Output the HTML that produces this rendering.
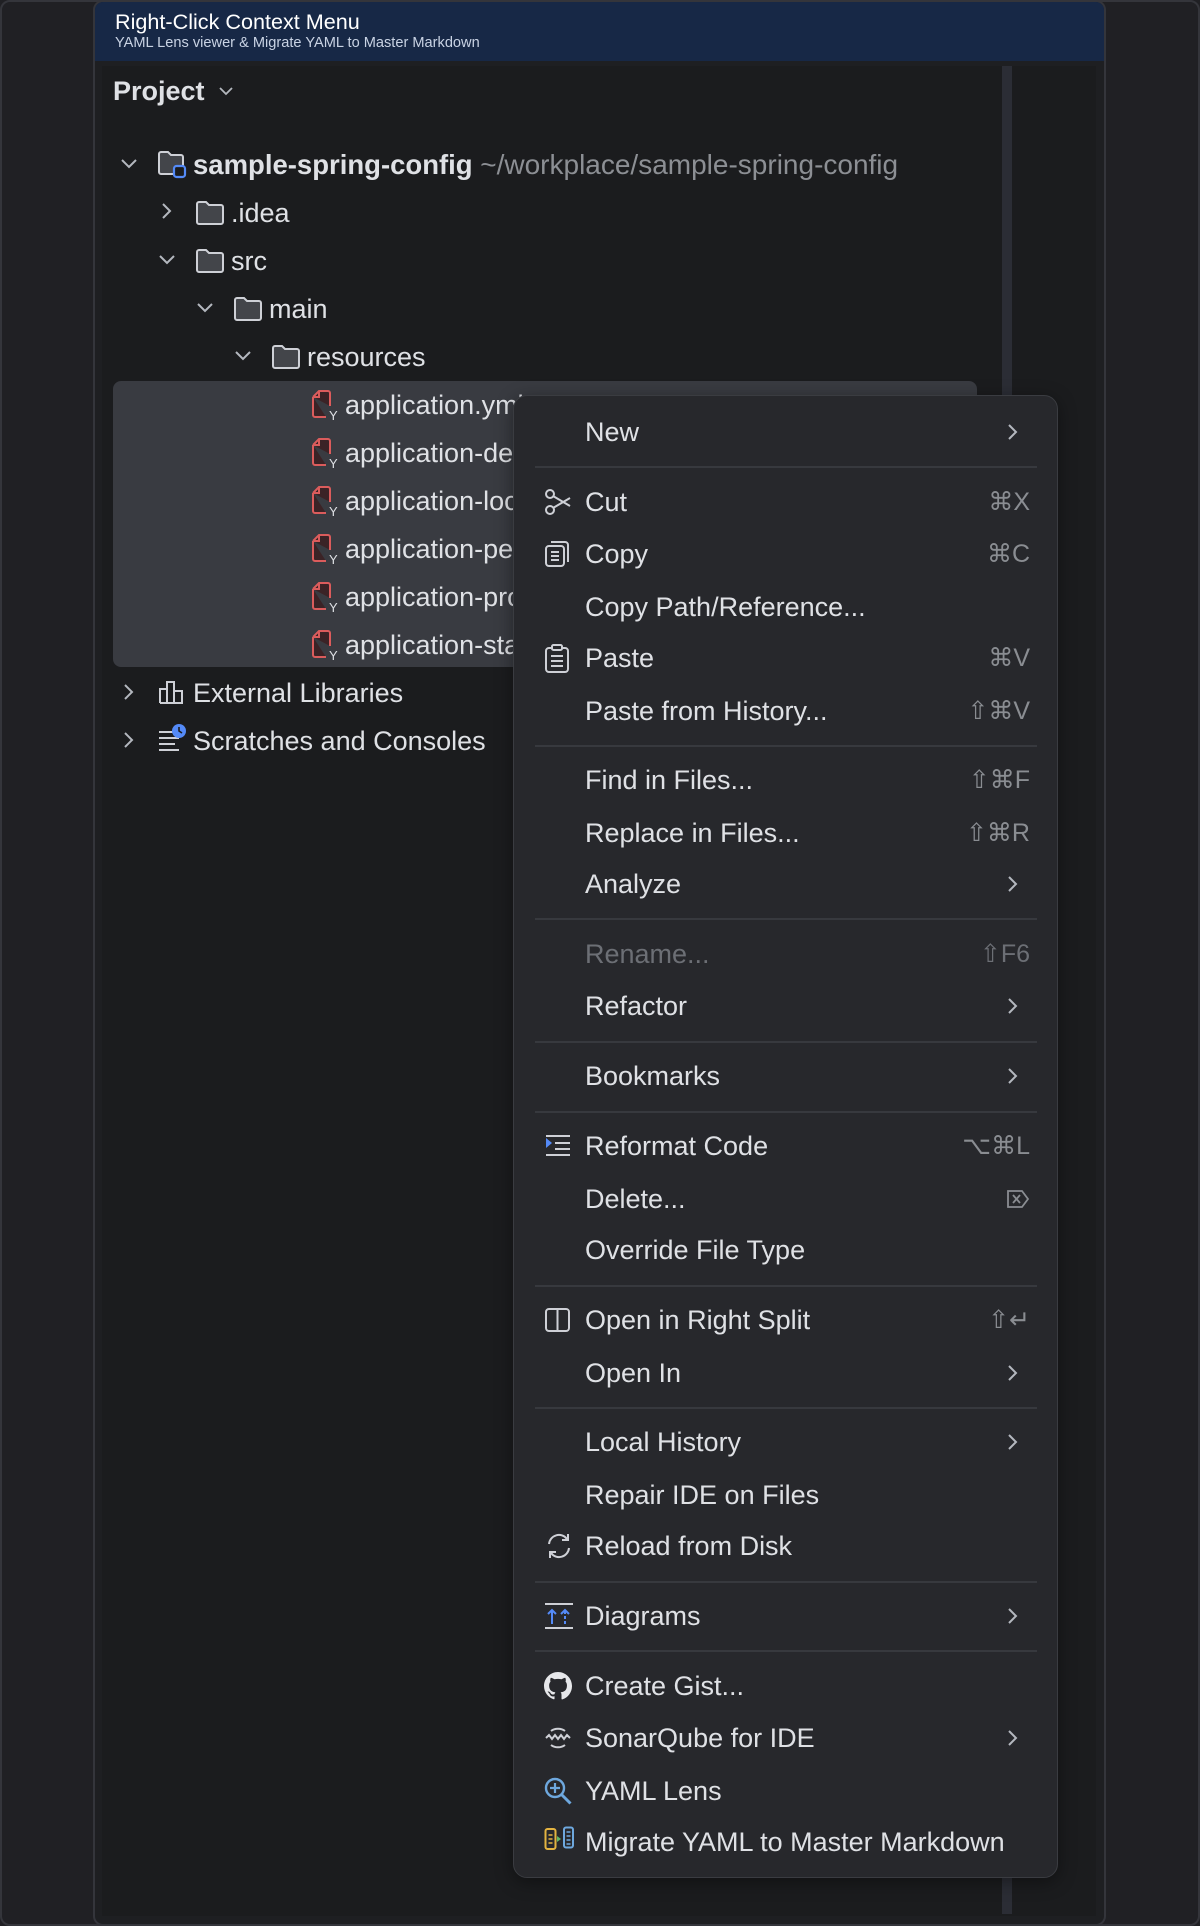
<!DOCTYPE html>
<html><head><meta charset="utf-8"><style>
:root{--s:1.2283}
*{margin:0;padding:0;box-sizing:border-box}
body{width:1200px;height:1926px;background:#202024;font-family:"Liberation Sans",sans-serif;position:relative;overflow:hidden;color:#dfe1e5}
.outer{position:absolute;left:0;top:0;width:1200px;height:1926px;border:2px solid #34353b;border-radius:10px;}
.frame{position:absolute;left:93px;top:0;width:1013px;height:1926px;border:2px solid #34353b;border-radius:10px;background:#1e1f22;overflow:hidden}
.hdr{position:absolute;left:0;top:0;right:0;height:59px;background:#172846}
.hdr .t{position:absolute;left:20px;top:7px;font-size:21.6px;color:#fff}
.hdr .st{position:absolute;left:20px;top:33px;font-size:14.6px;color:#c9d3e4}
.panel{position:absolute;left:102px;top:66px;width:994px;height:1850px;background:#1b1c1e}
.sb{position:absolute;left:1002px;top:66px;width:10px;height:1848px;background:#2b2d35}
.sel{position:absolute;left:113px;top:381px;width:864px;height:286px;background:#393b41;border-radius:8px}
.row{position:absolute;height:48px;line-height:48px;font-size:27px;white-space:nowrap;color:#dfe1e5}
.ic{position:absolute}
.menu{position:absolute;left:513px;top:395px;width:545px;height:1483px;background:#27282c;border:1.5px solid #3a3c41;border-radius:14px;box-shadow:0 4px 18px rgba(0,0,0,.4)}
.mi{position:absolute;left:585px;height:52px;line-height:52px;font-size:27px;color:#dfe1e5;white-space:nowrap}
.sc{position:absolute;right:170px;height:52px;line-height:52px;font-size:25px;color:#8a8d92;white-space:nowrap;text-align:right}
.sep{position:absolute;left:535px;width:502px;height:2px;background:#37393e}
.chev{position:absolute;left:1006px}
.mic{position:absolute;left:544px}
</style></head><body>
<div class="outer"></div>
<div class="frame">
 <div class="hdr"><div class="t">Right-Click Context Menu</div><div class="st">YAML Lens viewer &amp; Migrate YAML to Master Markdown</div></div>
</div>
<div class="panel"></div>
<div class="sb"></div>
<div class="row" style="left:113px;top:67px;font-weight:bold">Project</div>
<svg class="ic" style="left:218px;top:85px" width="16" height="12" viewBox="0 0 16 12"><path d="M2 3l6 6 6-6" fill="none" stroke="#b4b8bf" stroke-width="1.8"/></svg>
<div class="sel"></div>

<svg class="ic" style="left:120px;top:157px" width="18" height="14"><path d="M2 3l7 7 7-7" fill="none" stroke="#b4b8bf" stroke-width="2"/></svg>
<svg class="ic" style="left:160px;top:202px" width="14" height="18"><path d="M3 2l7 7-7 7" fill="none" stroke="#b4b8bf" stroke-width="2"/></svg>
<svg class="ic" style="left:158px;top:253px" width="18" height="14"><path d="M2 3l7 7 7-7" fill="none" stroke="#b4b8bf" stroke-width="2"/></svg>
<svg class="ic" style="left:196px;top:301px" width="18" height="14"><path d="M2 3l7 7 7-7" fill="none" stroke="#b4b8bf" stroke-width="2"/></svg>
<svg class="ic" style="left:234px;top:349px" width="18" height="14"><path d="M2 3l7 7 7-7" fill="none" stroke="#b4b8bf" stroke-width="2"/></svg>
<svg class="ic" style="left:122px;top:683px" width="14" height="18"><path d="M3 2l7 7-7 7" fill="none" stroke="#b4b8bf" stroke-width="2"/></svg>
<svg class="ic" style="left:122px;top:731px" width="14" height="18"><path d="M3 2l7 7-7 7" fill="none" stroke="#b4b8bf" stroke-width="2"/></svg>

<svg class="ic" style="left:157px;top:150px" width="32" height="30"><path d="M2 4a2 2 0 0 1 2-2h7l3 3h10a2 2 0 0 1 2 2v17H4a2 2 0 0 1-2-2z" fill="#43454a" stroke="#ced0d6" stroke-width="2"/><rect x="17" y="16" width="11" height="11" rx="2.5" fill="#1b1c1e" stroke="#548af7" stroke-width="2.2"/></svg>
<div class="row" style="left:193px;top:141px;font-weight:bold;font-size:27.5px">sample-spring-config <span style="font-weight:normal;color:#8c8f94;font-size:28px">~/workplace/sample-spring-config</span></div>

<svg class="ic" style="left:195px;top:200px" width="30" height="26"><path d="M2 4a2 2 0 0 1 2-2h7l3 3h12a2 2 0 0 1 2 2v15a2 2 0 0 1-2 2H4a2 2 0 0 1-2-2z" fill="#43454a" stroke="#ced0d6" stroke-width="2"/></svg>
<div class="row" style="left:231px;top:189px">.idea</div>
<svg class="ic" style="left:195px;top:248px" width="30" height="26"><path d="M2 4a2 2 0 0 1 2-2h7l3 3h12a2 2 0 0 1 2 2v15a2 2 0 0 1-2 2H4a2 2 0 0 1-2-2z" fill="#43454a" stroke="#ced0d6" stroke-width="2"/></svg>
<div class="row" style="left:231px;top:237px">src</div>
<svg class="ic" style="left:233px;top:296px" width="30" height="26"><path d="M2 4a2 2 0 0 1 2-2h7l3 3h12a2 2 0 0 1 2 2v15a2 2 0 0 1-2 2H4a2 2 0 0 1-2-2z" fill="#43454a" stroke="#ced0d6" stroke-width="2"/></svg>
<div class="row" style="left:269px;top:285px">main</div>
<svg class="ic" style="left:271px;top:344px" width="30" height="26"><path d="M2 4a2 2 0 0 1 2-2h7l3 3h12a2 2 0 0 1 2 2v15a2 2 0 0 1-2 2H4a2 2 0 0 1-2-2z" fill="#43454a" stroke="#ced0d6" stroke-width="2"/></svg>
<div class="row" style="left:307px;top:333px">resources</div>

<svg class="ic" style="left:311px;top:389px" width="28" height="32"><path d="M2 8l6-6h9a2 2 0 0 1 2 2v13M2 8v18a2 2 0 0 0 2 2h11" fill="#3b2326" stroke="#db5c5c" stroke-width="2"/><path d="M2 8h6V2" fill="none" stroke="#db5c5c" stroke-width="2"/><text x="18" y="31" font-size="13" fill="#dfe1e5" font-family="Liberation Sans">Y</text></svg>
<div class="row" style="left:345px;top:381px">application.yml</div>
<svg class="ic" style="left:311px;top:437px" width="28" height="32"><path d="M2 8l6-6h9a2 2 0 0 1 2 2v13M2 8v18a2 2 0 0 0 2 2h11" fill="#3b2326" stroke="#db5c5c" stroke-width="2"/><path d="M2 8h6V2" fill="none" stroke="#db5c5c" stroke-width="2"/><text x="18" y="31" font-size="13" fill="#dfe1e5" font-family="Liberation Sans">Y</text></svg>
<div class="row" style="left:345px;top:429px">application-dev.yml</div>
<svg class="ic" style="left:311px;top:485px" width="28" height="32"><path d="M2 8l6-6h9a2 2 0 0 1 2 2v13M2 8v18a2 2 0 0 0 2 2h11" fill="#3b2326" stroke="#db5c5c" stroke-width="2"/><path d="M2 8h6V2" fill="none" stroke="#db5c5c" stroke-width="2"/><text x="18" y="31" font-size="13" fill="#dfe1e5" font-family="Liberation Sans">Y</text></svg>
<div class="row" style="left:345px;top:477px">application-local.yml</div>
<svg class="ic" style="left:311px;top:533px" width="28" height="32"><path d="M2 8l6-6h9a2 2 0 0 1 2 2v13M2 8v18a2 2 0 0 0 2 2h11" fill="#3b2326" stroke="#db5c5c" stroke-width="2"/><path d="M2 8h6V2" fill="none" stroke="#db5c5c" stroke-width="2"/><text x="18" y="31" font-size="13" fill="#dfe1e5" font-family="Liberation Sans">Y</text></svg>
<div class="row" style="left:345px;top:525px">application-perf.yml</div>
<svg class="ic" style="left:311px;top:581px" width="28" height="32"><path d="M2 8l6-6h9a2 2 0 0 1 2 2v13M2 8v18a2 2 0 0 0 2 2h11" fill="#3b2326" stroke="#db5c5c" stroke-width="2"/><path d="M2 8h6V2" fill="none" stroke="#db5c5c" stroke-width="2"/><text x="18" y="31" font-size="13" fill="#dfe1e5" font-family="Liberation Sans">Y</text></svg>
<div class="row" style="left:345px;top:573px">application-prod.yml</div>
<svg class="ic" style="left:311px;top:629px" width="28" height="32"><path d="M2 8l6-6h9a2 2 0 0 1 2 2v13M2 8v18a2 2 0 0 0 2 2h11" fill="#3b2326" stroke="#db5c5c" stroke-width="2"/><path d="M2 8h6V2" fill="none" stroke="#db5c5c" stroke-width="2"/><text x="18" y="31" font-size="13" fill="#dfe1e5" font-family="Liberation Sans">Y</text></svg>
<div class="row" style="left:345px;top:621px">application-staging.yml</div>

<svg class="ic" style="left:158px;top:679px" width="28" height="26"><path d="M2 24V10h7v14M9 24V3h7v21M16 24V12h8v12zM2 24h22" fill="none" stroke="#ced0d6" stroke-width="2"/></svg>
<div class="row" style="left:193px;top:669px">External Libraries</div>
<svg class="ic" style="left:157px;top:723px" width="30" height="28"><path d="M2 9h14M2 15h20M2 21h16M2 27h20" stroke="#ced0d6" stroke-width="2"/><circle cx="22" cy="8" r="7" fill="#548af7"/><path d="M22 4v4l3 2" stroke="#1b1c1e" stroke-width="1.6" fill="none"/></svg>
<div class="row" style="left:193px;top:717px">Scratches and Consoles</div>

<div class="menu"></div>

<div class="mi" style="top:calc(352px*var(--s) - 26px)">New</div>
<div class="sep" style="top:calc(380px*var(--s) - 1px)"></div>
<div class="mi" style="top:calc(409px*var(--s) - 26px)">Cut</div>
<div class="mi" style="top:calc(451px*var(--s) - 26px)">Copy</div>
<div class="mi" style="top:calc(494px*var(--s) - 26px)">Copy Path/Reference...</div>
<div class="mi" style="top:calc(536px*var(--s) - 26px)">Paste</div>
<div class="mi" style="top:calc(579px*var(--s) - 26px)">Paste from History...</div>
<div class="sep" style="top:calc(607px*var(--s) - 1px)"></div>
<div class="mi" style="top:calc(635px*var(--s) - 26px)">Find in Files...</div>
<div class="mi" style="top:calc(678px*var(--s) - 26px)">Replace in Files...</div>
<div class="mi" style="top:calc(720px*var(--s) - 26px)">Analyze</div>
<div class="sep" style="top:calc(748px*var(--s) - 1px)"></div>
<div class="mi" style="top:calc(777px*var(--s) - 26px);color:#6c6f75">Rename...</div>
<div class="mi" style="top:calc(819px*var(--s) - 26px)">Refactor</div>
<div class="sep" style="top:calc(848px*var(--s) - 1px)"></div>
<div class="mi" style="top:calc(876px*var(--s) - 26px)">Bookmarks</div>
<div class="sep" style="top:calc(905px*var(--s) - 1px)"></div>
<div class="mi" style="top:calc(933px*var(--s) - 26px)">Reformat Code</div>
<div class="mi" style="top:calc(976px*var(--s) - 26px)">Delete...</div>
<div class="mi" style="top:calc(1018px*var(--s) - 26px)">Override File Type</div>
<div class="sep" style="top:calc(1047px*var(--s) - 1px)"></div>
<div class="mi" style="top:calc(1075px*var(--s) - 26px)">Open in Right Split</div>
<div class="mi" style="top:calc(1118px*var(--s) - 26px)">Open In</div>
<div class="sep" style="top:calc(1146px*var(--s) - 1px)"></div>
<div class="mi" style="top:calc(1174px*var(--s) - 26px)">Local History</div>
<div class="mi" style="top:calc(1217px*var(--s) - 26px)">Repair IDE on Files</div>
<div class="mi" style="top:calc(1259px*var(--s) - 26px)">Reload from Disk</div>
<div class="sep" style="top:calc(1288px*var(--s) - 1px)"></div>
<div class="mi" style="top:calc(1316px*var(--s) - 26px)">Diagrams</div>
<div class="sep" style="top:calc(1344px*var(--s) - 1px)"></div>
<div class="mi" style="top:calc(1373px*var(--s) - 26px)">Create Gist...</div>
<div class="mi" style="top:calc(1415px*var(--s) - 26px)">SonarQube for IDE</div>
<div class="mi" style="top:calc(1458px*var(--s) - 26px)">YAML Lens</div>
<div class="mi" style="top:calc(1500px*var(--s) - 26px)">Migrate YAML to Master Markdown</div>

<div class="sc" style="top:calc(409px*var(--s) - 26px)">⌘X</div>
<div class="sc" style="top:calc(451px*var(--s) - 26px)">⌘C</div>
<div class="sc" style="top:calc(536px*var(--s) - 26px)">⌘V</div>
<div class="sc" style="top:calc(579px*var(--s) - 26px)">⇧⌘V</div>
<div class="sc" style="top:calc(635px*var(--s) - 26px)">⇧⌘F</div>
<div class="sc" style="top:calc(678px*var(--s) - 26px)">⇧⌘R</div>
<div class="sc" style="top:calc(777px*var(--s) - 26px);color:#6c6f75">⇧F6</div>
<div class="sc" style="top:calc(933px*var(--s) - 26px)">⌥⌘L</div>
<svg class="ic" style="left:1006px;top:calc(976px*var(--s) - 11px)" width="24" height="22"><path d="M2 3h14l6 8-6 8H2z" fill="none" stroke="#8a8d92" stroke-width="1.8"/><path d="M7 7l7 8M14 7l-7 8" stroke="#8a8d92" stroke-width="1.8"/></svg>
<div class="sc" style="top:calc(1075px*var(--s) - 26px)">⇧↵</div>

<svg class="chev" style="top:calc(352px*var(--s) - 9px)" width="14" height="18"><path d="M3 2l7 7-7 7" fill="none" stroke="#b4b8bf" stroke-width="2"/></svg>
<svg class="chev" style="top:calc(720px*var(--s) - 9px)" width="14" height="18"><path d="M3 2l7 7-7 7" fill="none" stroke="#b4b8bf" stroke-width="2"/></svg>
<svg class="chev" style="top:calc(819px*var(--s) - 9px)" width="14" height="18"><path d="M3 2l7 7-7 7" fill="none" stroke="#b4b8bf" stroke-width="2"/></svg>
<svg class="chev" style="top:calc(876px*var(--s) - 9px)" width="14" height="18"><path d="M3 2l7 7-7 7" fill="none" stroke="#b4b8bf" stroke-width="2"/></svg>
<svg class="chev" style="top:calc(1118px*var(--s) - 9px)" width="14" height="18"><path d="M3 2l7 7-7 7" fill="none" stroke="#b4b8bf" stroke-width="2"/></svg>
<svg class="chev" style="top:calc(1174px*var(--s) - 9px)" width="14" height="18"><path d="M3 2l7 7-7 7" fill="none" stroke="#b4b8bf" stroke-width="2"/></svg>
<svg class="chev" style="top:calc(1316px*var(--s) - 9px)" width="14" height="18"><path d="M3 2l7 7-7 7" fill="none" stroke="#b4b8bf" stroke-width="2"/></svg>
<svg class="chev" style="top:calc(1415px*var(--s) - 9px)" width="14" height="18"><path d="M3 2l7 7-7 7" fill="none" stroke="#b4b8bf" stroke-width="2"/></svg>

<svg class="mic" style="top:calc(409px*var(--s) - 14px)" width="28" height="28"><circle cx="6" cy="6" r="4" fill="none" stroke="#ced0d6" stroke-width="2"/><circle cx="6" cy="22" r="4" fill="none" stroke="#ced0d6" stroke-width="2"/><path d="M9 8l17 10M9 20l17-10" stroke="#ced0d6" stroke-width="2"/></svg>
<svg class="mic" style="top:calc(451px*var(--s) - 14px)" width="28" height="28"><rect x="2" y="6" width="18" height="20" rx="3" fill="none" stroke="#ced0d6" stroke-width="2"/><path d="M7 2h14a3 3 0 0 1 3 3v17" fill="none" stroke="#ced0d6" stroke-width="2"/><path d="M7 12h8M7 16h8M7 20h8" stroke="#ced0d6" stroke-width="2"/></svg>
<svg class="mic" style="top:calc(536px*var(--s) - 14px)" width="28" height="30"><rect x="2" y="4" width="22" height="24" rx="3" fill="none" stroke="#ced0d6" stroke-width="2"/><rect x="8" y="1" width="10" height="5" rx="1.5" fill="#27282c" stroke="#ced0d6" stroke-width="2"/><path d="M7 12h12M7 17h12M7 22h12" stroke="#ced0d6" stroke-width="2"/></svg>
<svg class="mic" style="top:calc(933px*var(--s) - 12px)" width="28" height="24"><path d="M2 4l6 5-6 5z" fill="#548af7"/><path d="M2 2h24M11 9h15M11 15h15M2 21h24" stroke="#ced0d6" stroke-width="2"/></svg>
<svg class="mic" style="top:calc(1075px*var(--s) - 13px)" width="28" height="26"><rect x="2" y="2" width="23" height="22" rx="3" fill="none" stroke="#ced0d6" stroke-width="2"/><path d="M13.5 2v22" stroke="#ced0d6" stroke-width="2"/></svg>
<svg class="mic" style="top:calc(1259px*var(--s) - 14px)" width="30" height="28"><path d="M5 12a10 10 0 0 1 18-5M25 16a10 10 0 0 1-18 5" fill="none" stroke="#ced0d6" stroke-width="2"/><path d="M24 2v6h-6M6 26v-6h6" fill="none" stroke="#ced0d6" stroke-width="2"/></svg>
<svg class="mic" style="top:calc(1316px*var(--s) - 14px)" width="30" height="28"><path d="M1 2h28M1 26h28" stroke="#ced0d6" stroke-width="2"/><path d="M8 22V8M4 12l4-4 4 4" fill="none" stroke="#548af7" stroke-width="2"/><path d="M21 22V8" stroke="#548af7" stroke-width="2" stroke-dasharray="3 2"/><path d="M17 12l4-4 4 4" fill="none" stroke="#548af7" stroke-width="2"/></svg>
<svg class="mic" style="top:calc(1373px*var(--s) - 14px)" width="28" height="28" viewBox="0 0 16 16"><path fill="#e6e7ea" d="M8 0C3.58 0 0 3.58 0 8c0 3.54 2.290 6.53 5.470 7.590.4.07.55-.17.55-.38v-1.330c-2.230.48-2.700-1.070-2.700-1.070-.36-.92-.89-1.170-.89-1.170-.73-.5.06-.49.06-.49.8.06 1.230.83 1.230.83.72 1.230 1.880.87 2.340.67.07-.52.28-.87.51-1.070-1.780-.2-3.650-.89-3.650-3.960 0-.87.31-1.590.82-2.150-.08-.2-.36-1.020.08-2.120 0 0 .67-.21 2.200.82a7.600 7.600 0 0 1 4 0c1.530-1.040 2.200-.82 2.200-.82.44 1.100.16 1.920.08 2.120.51.56.82 1.270.82 2.150 0 3.070-1.870 3.750-3.650 3.950.29.25.54.73.54 1.480v2.200c0 .21.15.46.55.38A8.010 8.010 0 0 0 16 8c0-4.420-3.580-8-8-8z"/></svg>
<svg class="mic" style="top:calc(1415px*var(--s) - 14px)" width="28" height="28"><path d="M7 7a10 8 0 0 1 14 0M7 21a10 8 0 0 0 14 0" fill="none" stroke="#ced0d6" stroke-width="2"/><path d="M2 14l3-3 3 4 3-4 3 4 3-4 3 4 3-4 3 3" fill="none" stroke="#ced0d6" stroke-width="2"/></svg>
<svg class="mic" style="top:calc(1458px*var(--s) - 14px)" width="30" height="30"><circle cx="11" cy="11" r="9" fill="none" stroke="#6ea8de" stroke-width="2.4"/><path d="M11 6v10M6 11h10" stroke="#6ea8de" stroke-width="2.2"/><path d="M17.5 17.5l9 9" stroke="#6ea8de" stroke-width="3"/></svg>
<svg class="mic" style="top:calc(1500px*var(--s) - 16px)" width="32" height="26"><rect x="1.5" y="3" width="10" height="20" rx="2" fill="none" stroke="#e3b341" stroke-width="2"/><path d="M4.5 9h4M4.5 13h4M4.5 17h4" stroke="#e3b341" stroke-width="1.6"/><path d="M13 10l4 3-4 3z" fill="#5fb865"/><rect x="20" y="1.5" width="9" height="20" rx="2" fill="none" stroke="#6ea8de" stroke-width="2"/><path d="M22.5 6h4M22.5 10h4M22.5 14h4M22.5 18h4" stroke="#6ea8de" stroke-width="1.4"/></svg>
</body></html>
